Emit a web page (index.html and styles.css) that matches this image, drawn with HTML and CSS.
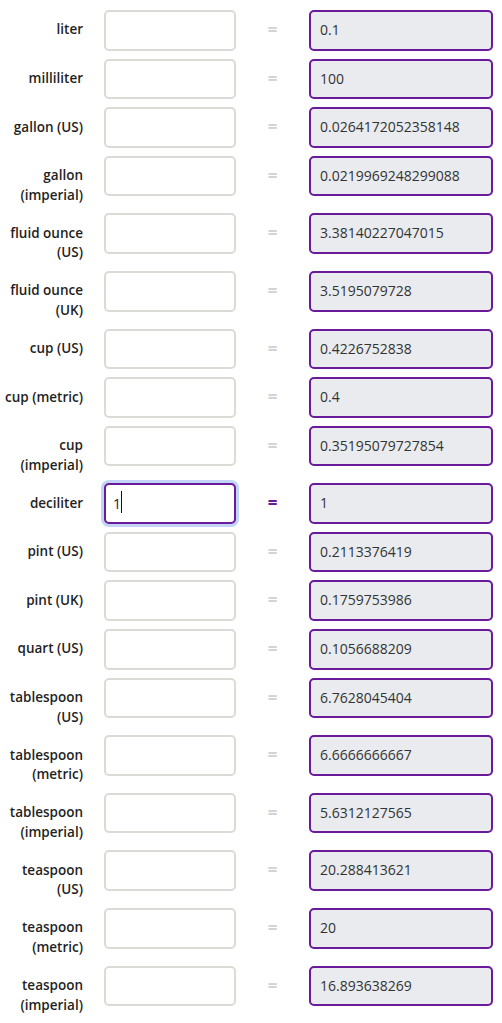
FILE: index.html
```html
<!DOCTYPE html>
<html lang="en">
<head>
  <meta charset="UTF-8">
  <meta name="viewport" content="width=device-width, initial-scale=1.0">
  <title>Volume converter</title>
  <link rel="stylesheet" href="styles.css">
</head>
<body>
  <div class="converter">
    <div class="row">
      <label class="unit">liter</label>
      <input class="source" type="text">
      <span class="equals">=</span>
      <div class="result">0.1</div>
    </div>
    <div class="row">
      <label class="unit">milliliter</label>
      <input class="source" type="text">
      <span class="equals">=</span>
      <div class="result">100</div>
    </div>
    <div class="row">
      <label class="unit">gallon (US)</label>
      <input class="source" type="text">
      <span class="equals">=</span>
      <div class="result">0.0264172052358148</div>
    </div>
    <div class="row">
      <label class="unit">gallon (imperial)</label>
      <input class="source" type="text">
      <span class="equals">=</span>
      <div class="result">0.0219969248299088</div>
    </div>
    <div class="row">
      <label class="unit">fluid ounce (US)</label>
      <input class="source" type="text">
      <span class="equals">=</span>
      <div class="result">3.38140227047015</div>
    </div>
    <div class="row">
      <label class="unit">fluid ounce (UK)</label>
      <input class="source" type="text">
      <span class="equals">=</span>
      <div class="result">3.5195079728</div>
    </div>
    <div class="row">
      <label class="unit">cup (US)</label>
      <input class="source" type="text">
      <span class="equals">=</span>
      <div class="result">0.4226752838</div>
    </div>
    <div class="row">
      <label class="unit">cup (metric)</label>
      <input class="source" type="text">
      <span class="equals">=</span>
      <div class="result">0.4</div>
    </div>
    <div class="row">
      <label class="unit">cup (imperial)</label>
      <input class="source" type="text">
      <span class="equals">=</span>
      <div class="result">0.35195079727854</div>
    </div>
    <div class="row active">
      <label class="unit">deciliter</label>
      <div class="field">
        <input class="source" type="text" value="1">
        <span class="caret"></span>
      </div>
      <span class="equals">=</span>
      <div class="result">1</div>
    </div>
    <div class="row">
      <label class="unit">pint (US)</label>
      <input class="source" type="text">
      <span class="equals">=</span>
      <div class="result">0.2113376419</div>
    </div>
    <div class="row">
      <label class="unit">pint (UK)</label>
      <input class="source" type="text">
      <span class="equals">=</span>
      <div class="result">0.1759753986</div>
    </div>
    <div class="row">
      <label class="unit">quart (US)</label>
      <input class="source" type="text">
      <span class="equals">=</span>
      <div class="result">0.1056688209</div>
    </div>
    <div class="row">
      <label class="unit">tablespoon (US)</label>
      <input class="source" type="text">
      <span class="equals">=</span>
      <div class="result">6.7628045404</div>
    </div>
    <div class="row">
      <label class="unit">tablespoon (metric)</label>
      <input class="source" type="text">
      <span class="equals">=</span>
      <div class="result">6.6666666667</div>
    </div>
    <div class="row">
      <label class="unit">tablespoon (imperial)</label>
      <input class="source" type="text">
      <span class="equals">=</span>
      <div class="result">5.6312127565</div>
    </div>
    <div class="row">
      <label class="unit">teaspoon (US)</label>
      <input class="source" type="text">
      <span class="equals">=</span>
      <div class="result">20.288413621</div>
    </div>
    <div class="row">
      <label class="unit">teaspoon (metric)</label>
      <input class="source" type="text">
      <span class="equals">=</span>
      <div class="result">20</div>
    </div>
    <div class="row">
      <label class="unit">teaspoon (imperial)</label>
      <input class="source" type="text">
      <span class="equals">=</span>
      <div class="result">16.893638269</div>
    </div>
  </div>
</body>
</html>
```

FILE: styles.css
```css
* {
  box-sizing: border-box;
}

body {
  margin: 0;
  font-family: 'Open Sans', 'Noto Sans', sans-serif;
  font-size: 14px;
  background: #fff;
  color: #222;
}

.converter {
  padding-top: 10px;
}

.row {
  display: grid;
  grid-template-columns: 83px 153px 73px 184px;
  align-items: start;
  margin-bottom: 8px;
}

.unit {
  text-align: right;
  font-size: 13.5px;
  font-weight: 600;
  line-height: 19.6px;
  padding-top: 10.4px;
  color: #1f1f1f;
}

.source {
  margin-left: 21px;
  width: 132px;
  height: 40.6px;
  padding: 0 7px;
  border: 2px solid #dcdad4;
  border-radius: 5px;
  background: #fff;
  font-family: inherit;
  font-size: 14px;
  color: #222;
  outline: none;
}

.field {
  position: relative;
  margin-left: 21px;
}

.field .source {
  margin-left: 0;
}

.caret {
  position: absolute;
  left: 17px;
  top: 8px;
  width: 1px;
  height: 22px;
  background: #111;
}

.equals {
  text-align: center;
  font-size: 17px;
  font-weight: 700;
  line-height: 40.6px;
  color: #d4d4d6;
}

.result {
  height: 40.6px;
  padding: 0 9px;
  border: 2px solid #6a1b9a;
  border-radius: 5px;
  background: #e9ebee;
  font-size: 14px;
  line-height: 36.6px;
  color: #333;
  white-space: nowrap;
}

.active .source {
  border-color: #6a1b9a;
  box-shadow: 0 0 0 3px #c3d5f7;
}

.active .equals {
  color: #6a1b9a;
}
```
